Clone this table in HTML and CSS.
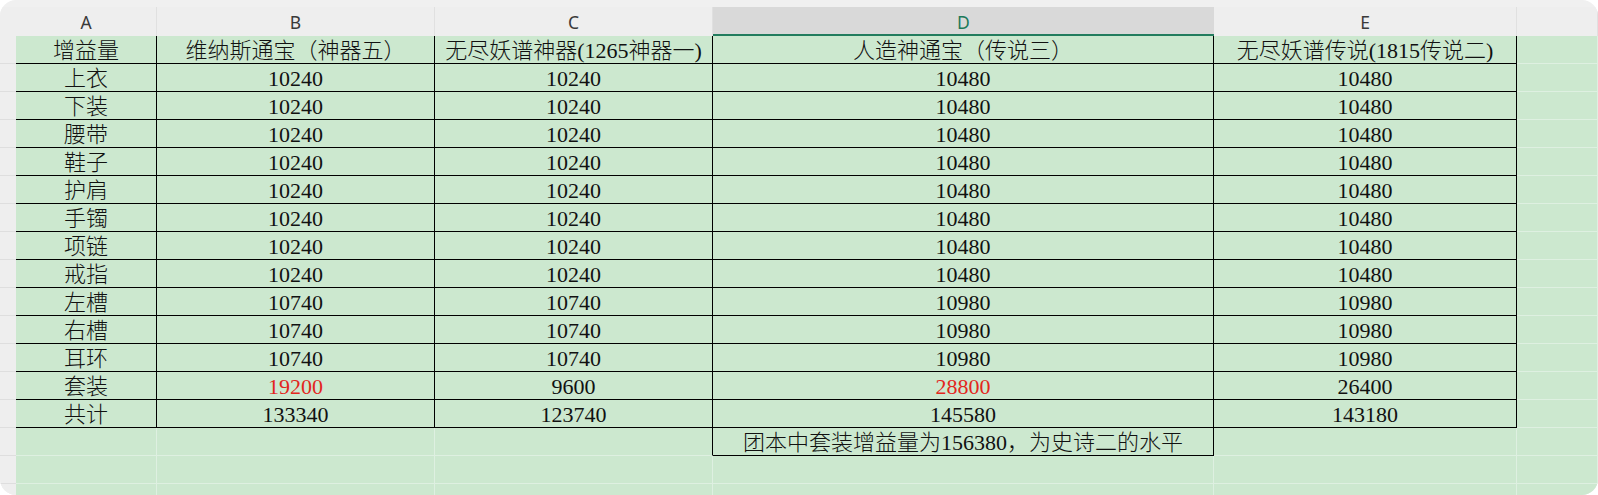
FILE: index.html
```html
<!DOCTYPE html>
<html lang="zh">
<head>
<meta charset="utf-8">
<title>增益量</title>
<link rel="stylesheet" href="styles.css">
</head>
<body>
<div class="frame">
  <div class="sheet">
    <div class="corner"></div>
    <div class="ch">A</div>
    <div class="ch">B</div>
    <div class="ch">C</div>
    <div class="ch active">D</div>
    <div class="ch">E</div>
    <div class="ch"></div>

    <div class="rh"></div>
    <div class="c t">增益量</div>
    <div class="c t">维纳斯通宝（神器五）</div>
    <div class="c t">无尽妖谱神器(1265神器一)</div>
    <div class="c t">人造神通宝（传说三）</div>
    <div class="c t">无尽妖谱传说(1815传说二)</div>
    <div class="c"></div>

    <div class="rh"></div><div class="c t">上衣</div><div class="c t">10240</div><div class="c t">10240</div><div class="c t">10480</div><div class="c t">10480</div><div class="c"></div>
    <div class="rh"></div><div class="c t">下装</div><div class="c t">10240</div><div class="c t">10240</div><div class="c t">10480</div><div class="c t">10480</div><div class="c"></div>
    <div class="rh"></div><div class="c t">腰带</div><div class="c t">10240</div><div class="c t">10240</div><div class="c t">10480</div><div class="c t">10480</div><div class="c"></div>
    <div class="rh"></div><div class="c t">鞋子</div><div class="c t">10240</div><div class="c t">10240</div><div class="c t">10480</div><div class="c t">10480</div><div class="c"></div>
    <div class="rh"></div><div class="c t">护肩</div><div class="c t">10240</div><div class="c t">10240</div><div class="c t">10480</div><div class="c t">10480</div><div class="c"></div>
    <div class="rh"></div><div class="c t">手镯</div><div class="c t">10240</div><div class="c t">10240</div><div class="c t">10480</div><div class="c t">10480</div><div class="c"></div>
    <div class="rh"></div><div class="c t">项链</div><div class="c t">10240</div><div class="c t">10240</div><div class="c t">10480</div><div class="c t">10480</div><div class="c"></div>
    <div class="rh"></div><div class="c t">戒指</div><div class="c t">10240</div><div class="c t">10240</div><div class="c t">10480</div><div class="c t">10480</div><div class="c"></div>
    <div class="rh"></div><div class="c t">左槽</div><div class="c t">10740</div><div class="c t">10740</div><div class="c t">10980</div><div class="c t">10980</div><div class="c"></div>
    <div class="rh"></div><div class="c t">右槽</div><div class="c t">10740</div><div class="c t">10740</div><div class="c t">10980</div><div class="c t">10980</div><div class="c"></div>
    <div class="rh"></div><div class="c t">耳环</div><div class="c t">10740</div><div class="c t">10740</div><div class="c t">10980</div><div class="c t">10980</div><div class="c"></div>
    <div class="rh"></div><div class="c t">套装</div><div class="c t red">19200</div><div class="c t">9600</div><div class="c t red">28800</div><div class="c t">26400</div><div class="c"></div>
    <div class="rh"></div><div class="c t">共计</div><div class="c t">133340</div><div class="c t">123740</div><div class="c t">145580</div><div class="c t">143180</div><div class="c"></div>

    <div class="rh"></div><div class="c"></div><div class="c"></div><div class="c br"></div><div class="c t">团本中套装增益量为156380，为史诗二的水平</div><div class="c"></div><div class="c"></div>
    <div class="rh"></div><div class="c"></div><div class="c"></div><div class="c"></div><div class="c"></div><div class="c"></div><div class="c"></div>
    <div class="rh"></div><div class="c"></div><div class="c"></div><div class="c"></div><div class="c"></div><div class="c"></div><div class="c"></div>
  </div>
</div>
</body>
</html>
```

FILE: styles.css
```css
html, body {
  margin: 0;
  padding: 0;
  background: #ffffff;
}

.frame {
  width: 1598px;
  height: 495px;
  border-radius: 16px;
  background: #f0f0f0;
  overflow: hidden;
  padding-top: 7px;
  box-sizing: border-box;
}

.sheet {
  display: grid;
  grid-template-columns: 16px 141px 278px 278px 501px 303px 1fr;
  grid-template-rows: 29px repeat(17, 28px);
}

.corner {
  background: #eeeeee;
}

.ch {
  background: #eeeeee;
  border-right: 1px solid #e0e0e0;
  box-sizing: border-box;
  display: flex;
  align-items: center;
  justify-content: center;
  font-family: "Noto Sans", "Open Sans", sans-serif;
  font-size: 17.5px;
  color: #3a3a3a;
  padding-top: 1px;
}

.ch.active {
  background: #d9d9d9;
  color: #1d7a5a;
  border-bottom: 2px solid #237c5e;
  border-right: none;
  padding-top: 3px;
}

.rh {
  background: #eeeeee;
  border-bottom: 1px solid #dedede;
  box-sizing: border-box;
}

.c {
  background: #cce8cf;
  border-right: 1px solid #def0e1;
  border-bottom: 1px solid #def0e1;
  box-sizing: border-box;
  display: flex;
  align-items: center;
  justify-content: center;
  white-space: nowrap;
  font-family: "Liberation Serif", "Noto Sans CJK SC", serif;
  font-weight: 300;
  font-size: 22px;
  line-height: 1;
  color: #111111;
  padding-top: 3px;
  overflow: visible;
}

.c.t {
  border-right-color: #000000;
  border-bottom-color: #000000;
}

.c.br {
  border-right-color: #000000;
}

.c.red {
  color: #e3261d;
}
```
